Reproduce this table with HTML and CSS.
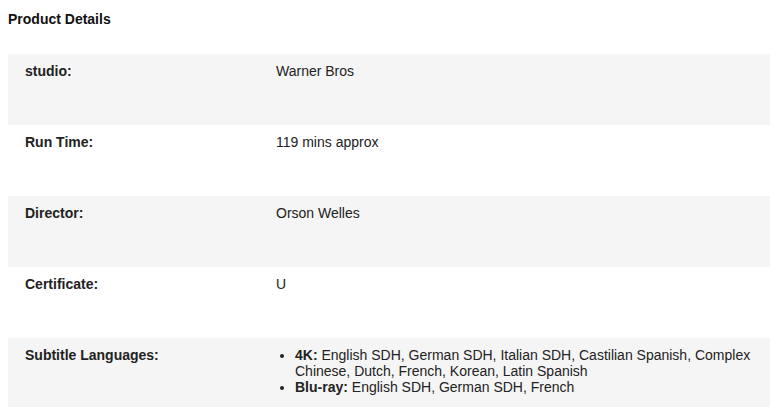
FILE: index.html
```html
<!DOCTYPE html>
<html lang="en">
<head>
<meta charset="utf-8">
<title>Product Details</title>
<link rel="stylesheet" href="styles.css">
</head>
<body>
<h2 class="title">Product Details</h2>
<div class="details">
  <div class="row alt">
    <div class="label">studio:</div>
    <div class="value">Warner Bros</div>
  </div>
  <div class="row">
    <div class="label">Run Time:</div>
    <div class="value">119 mins approx</div>
  </div>
  <div class="row alt">
    <div class="label">Director:</div>
    <div class="value">Orson Welles</div>
  </div>
  <div class="row">
    <div class="label">Certificate:</div>
    <div class="value">U</div>
  </div>
  <div class="row alt">
    <div class="label">Subtitle Languages:</div>
    <div class="value">
      <ul class="langs">
        <li><strong>4K:</strong> English SDH, German SDH, Italian SDH, Castilian Spanish, Complex Chinese, Dutch, French, Korean, Latin Spanish</li>
        <li><strong>Blu-ray:</strong> English SDH, German SDH, French</li>
      </ul>
    </div>
  </div>
</div>
</body>
</html>
```
FILE: styles.css
```css
html, body {
  margin: 0;
  padding: 0;
  background: #fff;
  overflow: hidden;
}
body {
  padding: 0 0 0 8px;
  font-family: "Liberation Sans", Arial, sans-serif;
  font-size: 14px;
  line-height: 16px;
  color: #222;
}
.title {
  margin: 0;
  padding-top: 11px;
  font-size: 14px;
  line-height: 16px;
  font-weight: bold;
  color: #111;
}
.details {
  margin-top: 27px;
  width: 780px;
}
.row {
  display: grid;
  grid-template-columns: 251px 1fr;
  min-height: 71px;
  box-sizing: border-box;
}
.row.alt {
  background: #f5f5f5;
}
.label, .value {
  padding: 9px 17px;
}
.label {
  font-weight: bold;
}
.langs {
  margin: 0;
  padding-left: 19px;
  list-style: disc;
}
.langs strong {
  font-weight: bold;
}
```
